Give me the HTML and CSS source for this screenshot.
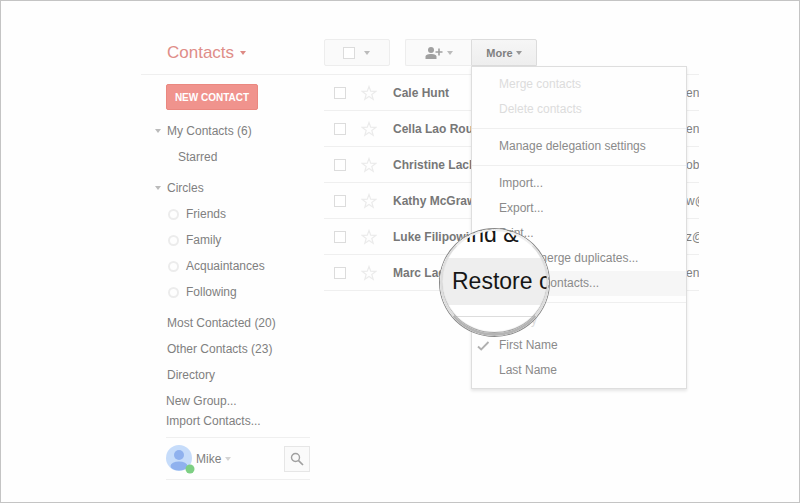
FILE: index.html
```
<!DOCTYPE html>
<html lang="en">
<head>
    <meta charset="utf-8">
    <title>Contacts</title>
    <link rel="stylesheet" href="styles.css">
</head>
<body>
    <!-- Shared star shape for the contact rows -->
    <svg class="defs" width="0" height="0">
        <symbol id="star" viewBox="0 0 16 16">
            <path d="M8 1.5l1.7 4.7 5 .2-3.9 3.1 1.4 4.8L8 11.5l-4.2 2.8 1.400-4.800L1.300 6.400l5-.2z" fill="none" stroke="#ebebeb" stroke-width="1.200"/>
        </symbol>
    </svg>

    <div class="app">
        <header class="header">
            <a class="title" href="#">Contacts <span class="caret caret-red"></span></a>
            <div class="toolbar">
                <div class="btn btn-select">
                    <input type="checkbox" aria-label="Select all">
                    <span class="caret"></span>
                </div>
                <button class="btn btn-add" aria-label="Add to group">
                    <svg width="18" height="12" viewBox="0 0 18 12">
                        <circle cx="6" cy="3" r="3" fill="#a0a0a0"/>
                        <path d="M0.500 12V9.800C0.500 7.800 3 7 6 7s5.500.8 5.500 2.800V12z" fill="#a0a0a0"/>
                        <path d="M14 1.500v7M10.500 5h7" stroke="#a0a0a0" stroke-width="1.600"/>
                    </svg>
                    <span class="caret"></span>
                </button>
                <div class="more">
                    <button class="btn btn-more">More <span class="caret caret-dark"></span></button>
                    <ul class="menu">
                        <li class="disabled">Merge contacts</li>
                        <li class="disabled">Delete contacts</li>
                        <li class="divider"></li>
                        <li>Manage delegation settings</li>
                        <li class="divider"></li>
                        <li>Import...</li>
                        <li>Export...</li>
                        <li>Print...</li>
                        <li>Find &amp; merge duplicates...</li>
                        <li class="active">Restore contacts...
                            <!-- Magnifying glass over the active item -->
                            <div class="lens">
                                <div class="lens-row">Find &amp;</div>
                                <div class="lens-row lens-active">Restore contacts</div>
                                <div class="lens-line"></div>
                            </div>
                        </li>
                        <li class="divider"></li>
                        <li class="disabled">Sort by</li>
                        <li class="checked">
                            <svg class="check" width="13" height="10" viewBox="0 0 13 10">
                                <path d="M1 5.500l3.200 3L11.500 1" fill="none" stroke="#b0b0b0" stroke-width="1.800"/>
                            </svg>
                            First Name
                        </li>
                        <li>Last Name</li>
                    </ul>
                </div>
            </div>
        </header>

        <div class="content">
            <nav class="sidebar">
                <button class="new-contact">NEW CONTACT</button>
                <div class="group">
                    <a class="parent" href="#"><span class="caret"></span>My Contacts (6)</a>
                    <a class="child" href="#">Starred</a>
                </div>
                <div class="group">
                    <a class="parent" href="#"><span class="caret"></span>Circles</a>
                    <a class="circle" href="#">Friends</a>
                    <a class="circle" href="#">Family</a>
                    <a class="circle" href="#">Acquaintances</a>
                    <a class="circle" href="#">Following</a>
                </div>
                <div class="group">
                    <a href="#">Most Contacted (20)</a>
                    <a href="#">Other Contacts (23)</a>
                    <a href="#">Directory</a>
                </div>
                <div class="group actions">
                    <a href="#">New Group...</a>
                    <a href="#">Import Contacts...</a>
                </div>
                <div class="user">
                    <svg width="30" height="30" viewBox="0 0 30 30">
                        <clipPath id="face"><circle cx="13" cy="13" r="13"/></clipPath>
                        <g clip-path="url(#face)">
                            <rect width="26" height="26" fill="#c6dcfa"/>
                            <circle cx="13" cy="10" r="5" fill="#8fb1ee"/>
                            <ellipse cx="13" cy="21" rx="8.500" ry="4.500" fill="#8fb1ee"/>
                        </g>
                        <circle cx="24" cy="24" r="4.500" fill="#7dcf83"/>
                    </svg>
                    <span class="user-name">Mike</span>
                    <span class="caret caret-light"></span>
                    <button class="search" aria-label="Search">
                        <svg width="14" height="14" viewBox="0 0 14 14">
                            <circle cx="5.500" cy="5.500" r="4" fill="none" stroke="#a0a0a0" stroke-width="1.400"/>
                            <path d="M8.300 8.300l4.700 4.700" stroke="#a0a0a0" stroke-width="1.700"/>
                        </svg>
                    </button>
                </div>
            </nav>

            <main class="list">
                <div class="row">
                    <input type="checkbox" id="c1">
                    <svg width="16" height="16"><use href="#star"/></svg>
                    <label for="c1">Cale Hunt</label>
                    <span class="email">ena</span>
                </div>
                <div class="row">
                    <input type="checkbox" id="c2">
                    <svg width="16" height="16"><use href="#star"/></svg>
                    <label for="c2">Cella Lao Rou</label>
                    <span class="email">en</span>
                </div>
                <div class="row">
                    <input type="checkbox" id="c3">
                    <svg width="16" height="16"><use href="#star"/></svg>
                    <label for="c3">Christine Lach</label>
                    <span class="email">ob</span>
                </div>
                <div class="row">
                    <input type="checkbox" id="c4">
                    <svg width="16" height="16"><use href="#star"/></svg>
                    <label for="c4">Kathy McGraw</label>
                    <span class="email">w@</span>
                </div>
                <div class="row">
                    <input type="checkbox" id="c5">
                    <svg width="16" height="16"><use href="#star"/></svg>
                    <label for="c5">Luke Filipowi</label>
                    <span class="email">z@</span>
                </div>
                <div class="row">
                    <input type="checkbox" id="c6">
                    <svg width="16" height="16"><use href="#star"/></svg>
                    <label for="c6">Marc Lag</label>
                    <span class="email">en</span>
                </div>
            </main>
        </div>
    </div>
</body>
</html>
```
FILE: styles.css
```
*, *::before, *::after {
    box-sizing: border-box;
}

body {
    margin: 0;
    min-height: 100vh;
    border: 1px solid #c4c4c4;
    background-color: #fefefe;
    font-family: "Liberation Sans", Arial, sans-serif;
    font-size: 12px;
    color: #808080;
}

a {
    color: inherit;
    text-decoration: none;
}

button {
    font-family: inherit;
    cursor: pointer;
}

.defs {
    display: block;
}

.app {
    margin: 0 100px 0 140px;
}

/* Small down arrow */
.caret {
    display: inline-block;
    flex: none;
    border: 3px solid transparent;
    border-top: 4px solid #bbb;
    border-bottom: 0;
}

.caret-red {
    border-top-color: #dd8a84;
}

.caret-dark {
    border-top-color: #999;
}

.caret-light {
    border-top-color: #d4d4d4;
}

input[type="checkbox"] {
    appearance: none;
    width: 12px;
    height: 12px;
    margin: 0;
    border: 1px solid #dcdcdc;
    background-color: #fff;
}

/* Header */
.header {
    display: flex;
    align-items: center;
    height: 74px;
    padding-top: 30px;
    border-bottom: 1px solid #efefef;
}

.title {
    display: flex;
    align-items: center;
    gap: 6px;
    width: 183px;
    padding-left: 26px;
    font-size: 17px;
    color: #df8d88;
}

.toolbar {
    display: flex;
}

.btn {
    display: flex;
    align-items: center;
    justify-content: center;
    gap: 4px;
    width: 66px;
    height: 27px;
    padding: 0;
    border: 1px solid #ededed;
    border-radius: 2px;
    background-color: #fafafa;
}

.btn-select {
    gap: 9px;
    margin-right: 15px;
    padding-right: 2px;
}

.btn-add {
    border-right: 0;
    border-radius: 2px 0 0 2px;
}

.btn-more {
    border-color: #dcdcdc;
    border-radius: 0 2px 0 0;
    background: linear-gradient(#f6f6f6, #eee);
    font-size: 11px;
    font-weight: bold;
    color: #808080;
    gap: 3px;
}

/* Drop-down menu */
.more {
    position: relative;
}

.menu {
    position: absolute;
    z-index: 1;
    top: 100%;
    left: 0;
    width: 216px;
    margin: 0;
    padding: 5px 0;
    border: 1px solid #dedede;
    background-color: #fefefe;
    box-shadow: 0 2px 3px rgba(0, 0, 0, 0.1);
    list-style: none;
}

.menu li {
    padding-left: 27px;
    line-height: 25px;
    color: #8a8a8a;
}

.menu .disabled {
    color: #dcdcdc;
}

.menu .divider {
    height: 1px;
    margin: 6px 0 5px;
    background-color: #efefef;
}

.menu .active {
    position: relative;
    background-color: #f6f6f6;
}

.menu .checked {
    display: flex;
    align-items: center;
    gap: 9px;
    padding-left: 5px;
}

/* Magnifying glass */
.lens {
    position: absolute;
    top: -43px;
    left: -33px;
    width: 111px;
    height: 109px;
    overflow: hidden;
    border: 1px solid #888;
    border-radius: 50%;
    background-color: #fff;
}

/* metal rim, drawn over the text */
.lens::after {
    content: "";
    position: absolute;
    inset: 0;
    border: 2px solid #ddd;
    border-top-color: #eee;
    border-bottom: 3px solid #b4b4b4;
    border-radius: 50%;
    box-shadow: inset 0 -1px 1px #999;
}

.lens-row {
    height: 47px;
    padding-left: 12px;
    font-size: 23px;
    line-height: 47px;
    color: #161616;
    white-space: nowrap;
}

.lens-row:first-child {
    margin-top: -18px;
}

.lens-active {
    background-color: #eee;
}

.lens-line {
    height: 1px;
    margin-top: 11px;
    background-color: #ddd;
}

/* Sidebar */
.content {
    display: flex;
}

.sidebar {
    width: 169px;
    padding: 9px 0 0 25px;
}

.new-contact {
    display: block;
    width: 92px;
    height: 26px;
    padding: 0;
    border: 1px solid #ea8880;
    border-radius: 2px;
    background-color: #f0938d;
    font-size: 10px;
    font-weight: bold;
    color: #fff;
}

.group {
    margin-top: 5px;
}

.new-contact + .group {
    margin-top: 8px;
}

.group a {
    display: flex;
    align-items: center;
    height: 26px;
    padding-left: 1px;
}

.group .parent {
    gap: 6px;
    margin-left: -12px;
}

.group .child {
    padding-left: 12px;
}

.group .circle {
    gap: 7px;
    padding-left: 2px;
}

.circle::before {
    content: "";
    width: 11px;
    height: 11px;
    border: 2px solid #ececec;
    border-radius: 50%;
}

.actions {
    margin: 3px 0 6px;
}

.actions a {
    height: 20px;
    padding-left: 0;
}

.user {
    display: flex;
    align-items: center;
    height: 43px;
    border-top: 1px solid #efefef;
    border-bottom: 1px solid #efefef;
}

.user svg {
    margin-top: 3px;
}

.user-name {
    margin-right: 4px;
}

.search {
    display: flex;
    align-items: center;
    justify-content: center;
    width: 26px;
    height: 26px;
    margin-left: auto;
    padding: 0;
    border: 1px solid #e6e6e6;
    background-color: #fafafa;
}

.search svg {
    margin: 0;
}

/* Contact list */
.list {
    flex: 1;
    margin-left: 14px;
}

.row {
    display: flex;
    align-items: center;
    height: 36px;
    padding-left: 10px;
    border-bottom: 1px solid #efefef;
}

.row svg {
    margin: 0 16px 0 15px;
}

.row label {
    font-weight: bold;
    color: #777;
}

.email {
    width: 13px;
    margin-left: auto;
    overflow: hidden;
    white-space: nowrap;
}
```
